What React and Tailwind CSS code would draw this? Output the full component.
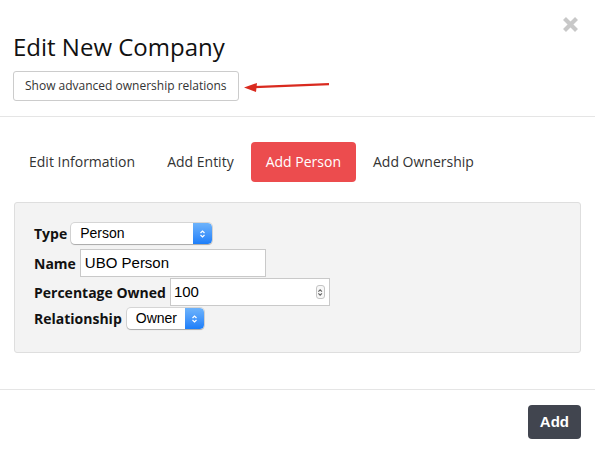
import React from "react";

function Stepper({ size = 10 }) {
    return (
        <svg width={size * 0.7} height={size} viewBox="0 0 7 10" fill="none">
            <path d="M1.5 4 L3.5 2 L5.5 4" stroke="currentColor" strokeWidth="1.2" />
            <path d="M1.5 6 L3.5 8 L5.5 6" stroke="currentColor" strokeWidth="1.2" />
        </svg>
    )
}

function MacSelect({ value, width }) {
    return (
        <div
            className={`inline-flex items-stretch h-[21px] rounded-[4px] bg-white shadow-[0_0_0_1px_rgba(0,0,0,0.12),0_1px_1px_rgba(0,0,0,0.2)] overflow-hidden align-middle ${width}`}
        >
            <span className="flex-1 pl-[9px] text-[14px] leading-[21px] font-normal text-black font-['Liberation_Sans',sans-serif]">
                {value}
            </span>
            <span className="w-[19px] flex items-center justify-center text-white bg-gradient-to-b from-[#6db3fb] to-[#1b7ef9] rounded-r-[4px]">
                <Stepper />
            </span>
        </div>
    )
}

export default function App() {
    const tabs = ['Edit Information', 'Add Entity', 'Add Person', 'Add Ownership']

    return (
        <div className="relative w-[595px] h-[453px] bg-white text-[#333] font-['Open_Sans',sans-serif] overflow-hidden">
            <button className="absolute top-[16px] right-[16px] text-[#c8c8c8]">
                <svg width="17" height="17" viewBox="0 0 17 17">
                    <path d="M2.5 2.5 L14.5 14.5 M14.5 2.5 L2.5 14.5" stroke="currentColor" strokeWidth="4.2" />
                </svg>
            </button>

            <div className="px-[13px] pt-[34px] pb-[15px] border-b border-[#e5e5e5]">
                <h1 className="text-[24px] leading-[26px] text-[#111] font-normal">Edit New Company</h1>
                <div className="flex items-center mt-[11px]">
                    <button className="h-[30px] px-[11px] border border-[#ccc] rounded-[3px] bg-white text-[12px] text-[#333]">
                        Show advanced ownership relations
                    </button>
                    <svg width="90" height="14" viewBox="0 0 90 14" className="ml-[4px]">
                        <path d="M10 8.2 L86 5.2" stroke="#d92a1f" strokeWidth="2.2" />
                        <path d="M1 8.5 L14 4 L13 13 Z" fill="#d92a1f" />
                    </svg>
                </div>
            </div>

            <div className="pt-[25px] pb-[36px]">
                <ul className="flex gap-[2px] px-[14px]">
                    {tabs.map(t => (
                        <li
                            key={t}
                            className={`h-[40px] px-[15px] leading-[40px] text-[14px] rounded-[4px] ${t === 'Add Person' ? 'bg-[#ec4c4e] text-white' : 'text-[#333]'}`}
                        >
                            {t}
                        </li>
                    ))}
                </ul>

                <div className="mx-[14px] mt-[20px] h-[151px] bg-[#f3f3f3] border border-[#dedede] rounded-[3px] pl-[19px] pt-[20px]">
                    <div className="flex flex-col text-[14px] text-[#111] font-bold">
                        <div className="flex items-center gap-[4px] h-[21px]">
                            <span>Type</span>
                            <MacSelect value="Person" width="w-[141px]" />
                        </div>
                        <div className="flex items-center gap-[4px] h-[28px] mt-[5px]">
                            <span>Name</span>
                            <div className="w-[186px] h-[28px] bg-white border border-[#c9c9c9] pl-[4px] text-[15px] leading-[26px] font-normal text-black font-['Liberation_Sans',sans-serif]">
                                UBO Person
                            </div>
                        </div>
                        <div className="flex items-center gap-[4px] h-[28px] mt-[1px]">
                            <span>Percentage Owned</span>
                            <div className="flex items-center w-[160px] h-[28px] bg-white border border-[#c9c9c9] pl-[3px] pr-[4px] text-[15px] font-normal text-black font-['Liberation_Sans',sans-serif]">
                                <span className="flex-1">100</span>
                                <span className="w-[9px] h-[14px] flex items-center justify-center rounded-[3px] border border-[#c4c4c4] text-[#666] bg-[#f7f7f7]">
                                    <Stepper size={9} />
                                </span>
                            </div>
                        </div>
                        <div className="flex items-center gap-[5px] h-[23px] mt-[1px]">
                            <span>Relationship</span>
                            <MacSelect value="Owner" width="w-[77px]" />
                        </div>
                    </div>
                </div>
            </div>

            <div className="border-t border-[#e5e5e5] flex justify-end px-[14px] pt-[15px]">
                <button className="h-[34px] px-[12px] rounded-[4px] bg-[#41454f] text-white text-[15px] font-semibold font-['Liberation_Sans',sans-serif]">
                    Add
                </button>
            </div>
        </div>
    )
}
